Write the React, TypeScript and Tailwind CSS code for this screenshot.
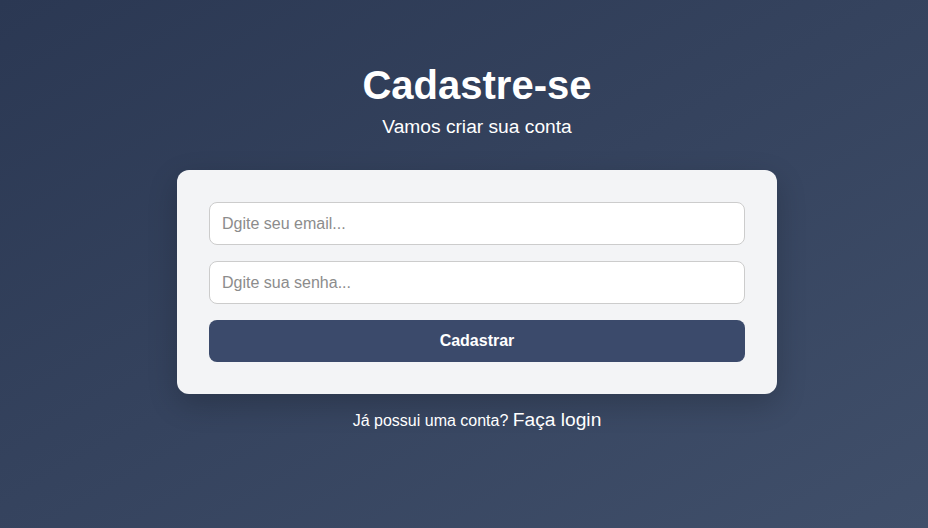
export default function App() {
  return (
    <div
      className="flex min-h-screen w-full flex-col items-center bg-gradient-to-br from-[#2b3853] to-[#404f6a] pl-[26px] pt-[62px] text-white"
      style={{ fontFamily: '"Liberation Sans", Arial, sans-serif' }}
    >
      <h1 className="text-[40px] font-bold leading-[46px]">Cadastre-se</h1>
      <p className="mt-2 text-[19.2px] leading-[21px]">Vamos criar sua conta</p>

      <form
        className="mt-[33px] flex w-[600px] flex-col gap-4 rounded-xl bg-[#f3f4f6] p-8 shadow-[0_10px_30px_rgba(0,0,0,0.2)]"
        onSubmit={(e) => e.preventDefault()}
      >
        <input
          type="email"
          placeholder="Dgite seu email..."
          className="h-[43px] w-full rounded-lg border border-[#cccccc] bg-white px-3 text-base text-[#333] outline-none placeholder:text-[#8c8c8c]"
        />
        <input
          type="password"
          placeholder="Dgite sua senha..."
          className="h-[43px] w-full rounded-lg border border-[#cccccc] bg-white px-3 text-base text-[#333] outline-none placeholder:text-[#8c8c8c]"
        />
        <button
          type="submit"
          className="h-[42px] w-full rounded-lg bg-[#3b4a6b] text-base font-bold text-white"
        >
          Cadastrar
        </button>
      </form>

      <p className="mt-3 text-base">
        Já possui uma conta? <a className="text-[19.2px] text-white">Faça login</a>
      </p>
    </div>
  );
}
